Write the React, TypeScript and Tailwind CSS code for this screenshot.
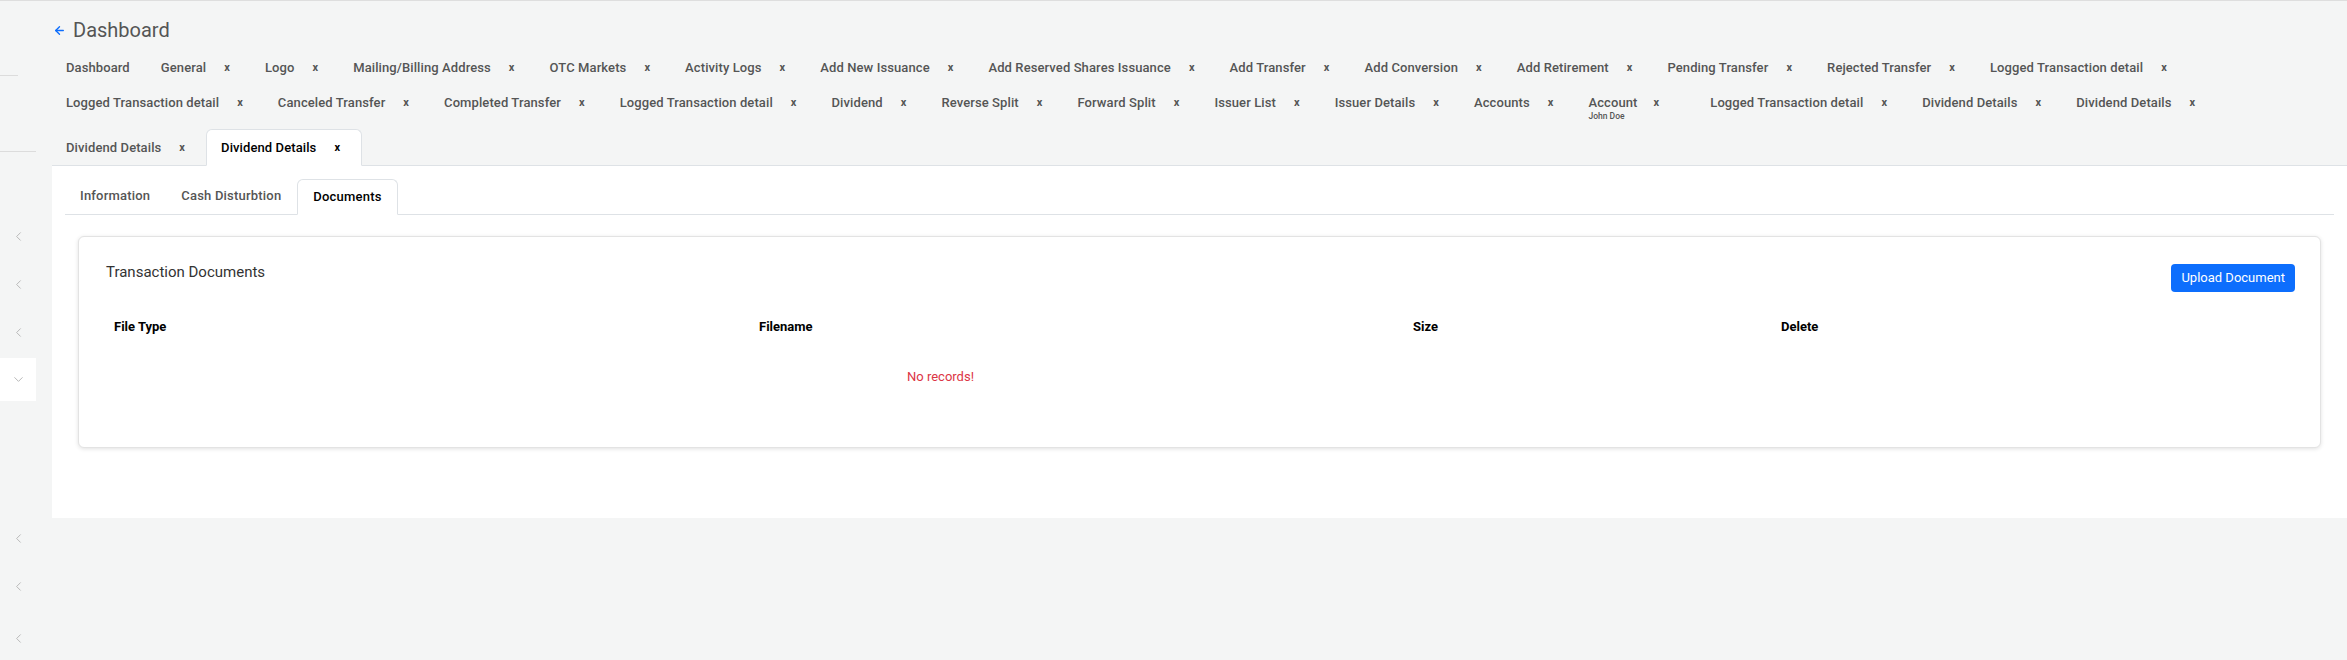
import { ArrowLeft, ChevronDown, ChevronLeft } from "lucide-react";

type Tab = { label: string; sub?: string; closable?: boolean; active?: boolean };

const rows: Tab[][] = [
	[
		{ label: "Dashboard", closable: false },
		{ label: "General" },
		{ label: "Logo" },
		{ label: "Mailing/Billing Address" },
		{ label: "OTC Markets" },
		{ label: "Activity Logs" },
		{ label: "Add New Issuance" },
		{ label: "Add Reserved Shares Issuance" },
		{ label: "Add Transfer" },
		{ label: "Add Conversion" },
		{ label: "Add Retirement" },
		{ label: "Pending Transfer" },
		{ label: "Rejected Transfer" },
		{ label: "Logged Transaction detail" },
	],
	[
		{ label: "Logged Transaction detail" },
		{ label: "Canceled Transfer" },
		{ label: "Completed Transfer" },
		{ label: "Logged Transaction detail" },
		{ label: "Dividend" },
		{ label: "Reverse Split" },
		{ label: "Forward Split" },
		{ label: "Issuer List" },
		{ label: "Issuer Details" },
		{ label: "Accounts" },
		{ label: "Account", sub: "John Doe" },
		{ label: "Logged Transaction detail" },
		{ label: "Dividend Details" },
		{ label: "Dividend Details" },
	],
	[{ label: "Dividend Details" }, { label: "Dividend Details", active: true }],
];

const PageTab = ({ tab }: { tab: Tab }) => {
	const closable = tab.closable !== false;
	let cls = "flex items-start pl-[14px] pt-[10px] pb-[9px] text-[13px] leading-4 font-medium tracking-[0.1px]";
	if (!closable) cls += " pr-[17px]";
	else if (tab.sub) cls += " pr-[37px]";
	else cls += " pr-[21px]";
	if (tab.active)
		cls += " bg-white text-black border border-[#dee2e6] border-b-white rounded-t-[6px] -mb-px relative z-10 -mt-px";
	else cls += " text-[#555]";
	return (
		<div className={cls}>
			{tab.sub ? (
				<div className="flex flex-col">
					<span>{tab.label}</span>
					<span className="text-[8.5px] leading-[10px] tracking-normal">{tab.sub}</span>
				</div>
			) : (
				<span className="whitespace-nowrap">{tab.label}</span>
			)}
			{closable && (
				<span className={`${tab.sub ? "ml-[16px]" : "ml-[18px]"} text-[11px] leading-4 font-bold`}>x</span>
			)}
		</div>
	);
};

const Sidebar = () => (
	<aside className="w-[52px] shrink-0 flex flex-col text-[#b9b9b9]">
		<div className="mt-[74px] h-px w-[18px] bg-[#dcdcdc]" />
		<div className="mt-[75px] h-px w-[36px] bg-[#dcdcdc]" />
		<div className="mt-[60px] flex flex-col">
			{[0, 1, 2].map((i) => (
				<div key={i} className="h-[48px] w-[36px] flex items-center justify-center">
					<ChevronLeft size={15} strokeWidth={1.6} />
				</div>
			))}
			<div className="mt-[2px] h-[43px] w-[36px] bg-white flex items-center justify-center">
				<ChevronDown size={15} strokeWidth={1.6} />
			</div>
			<div className="mt-[113px] h-[48px] w-[36px] flex items-center justify-center">
				<ChevronLeft size={15} strokeWidth={1.6} />
			</div>
			<div className="h-[48px] w-[36px] flex items-center justify-center">
				<ChevronLeft size={15} strokeWidth={1.6} />
			</div>
			<div className="h-[56px] w-[36px] flex items-center justify-center">
				<ChevronLeft size={15} strokeWidth={1.6} />
			</div>
		</div>
	</aside>
);

export default function App() {
	return (
		<div className="min-h-[660px] w-[2347px] bg-[#f4f5f5] border-t border-[#dedede] flex font-[family-name:Roboto,sans-serif] overflow-hidden">
			<Sidebar />
			<main className="flex-1 flex flex-col">
				<div className="flex items-center pt-[17px] h-[41px]">
					<ArrowLeft size={13} strokeWidth={2.5} className="ml-[1px] text-[#0d6efd]" />
					<h1 className="ml-[7px] text-[20px] leading-6 text-[#555]">Dashboard</h1>
				</div>
				<div className="mt-[8px] flex flex-col">
					{rows.map((row, r) => (
						<div key={r} className="flex items-start">
							{row.map((t, i) => (
								<PageTab key={i} tab={t} />
							))}
						</div>
					))}
				</div>
				<section className="bg-white border-t border-[#dee2e6] pt-[13px] px-[13px] pb-[70px]">
					<div className="flex border-b border-[#dee2e6] text-[13px] font-medium leading-4 tracking-[0.2px]">
						<div className="px-[15px] py-[9px] text-[#555]">Information</div>
						<div className="px-[16px] py-[9px] text-[#555]">Cash Disturbtion</div>
						<div className="px-[15px] py-[9px] text-black bg-white border border-[#dee2e6] border-b-white rounded-t-[6px] -mb-px">
							Documents
						</div>
					</div>
					<div className="mx-[13px] mt-[21px] bg-white border border-[#e3e3e3] rounded-[6px] shadow-[0_1px_4px_rgba(0,0,0,0.12)] pt-[24px] pl-[27px] pr-[25px] pb-[62px]">
						<div className="flex items-start justify-between">
							<h2 className="text-[15px] leading-[22px] text-[#333]">Transaction Documents</h2>
							<button className="mt-[3px] h-[28px] px-[10px] rounded-[4px] bg-[#0d6efd] text-white text-[13px]">
								Upload Document
							</button>
						</div>
						<div className="mt-[19px] grid grid-cols-[645px_654px_368px_1fr] text-[13px] font-bold leading-4 text-black">
							<div className="px-2 py-2">File Type</div>
							<div className="px-2 py-2">Filename</div>
							<div className="px-2 py-2">Size</div>
							<div className="px-2 py-2">Delete</div>
						</div>
						<div className="mt-[26px] pl-[801px] text-[13px] leading-4 text-[#dc3545]">No records!</div>
					</div>
				</section>
				<div className="flex-1" />
			</main>
		</div>
	);
}
